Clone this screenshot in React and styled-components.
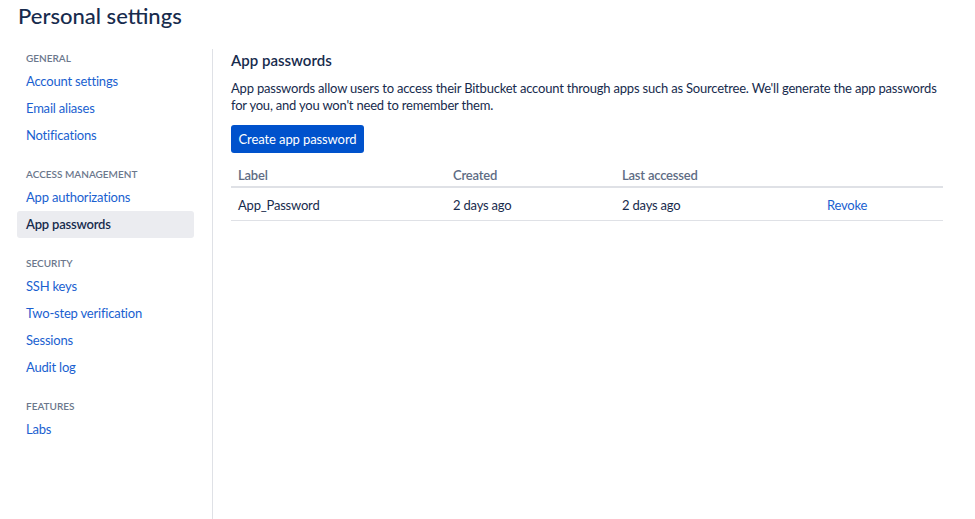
import React from "react";
import styled, { createGlobalStyle } from "styled-components";

const Global = createGlobalStyle`
  html, body { margin: 0; padding: 0; background: #fff; }
  body {
    font-family: "Lato", "Noto Sans", sans-serif;
    color: #172b4d;
  }
  * { box-sizing: border-box; }
`;

const Page = styled.div`
  padding: 0 32px 0 17px;
`;

const Title = styled.h1`
  margin: 0 0 17px 1px;
  font-size: 22px;
  line-height: 32px;
  font-weight: 500;
  color: #172b4d;
`;

const Body = styled.div`
  display: flex;
  min-height: calc(100vh - 49px);
`;

const Sidebar = styled.nav`
  width: 177px;
  flex: none;
  padding-top: 2px;
  margin-right: 18px;
`;

const Group = styled.div`
  & + & { margin-top: 18px; }
`;

const GroupTitle = styled.div`
  font-size: 10px;
  line-height: 14px;
  font-weight: 600;
  text-transform: uppercase;
  color: #6b778c;
  padding-left: 9px;
  margin-bottom: 3px;
`;

const NavItem = styled.a`
  display: block;
  height: 27px;
  line-height: 27px;
  padding-left: 9px;
  font-size: 13px;
  letter-spacing: -0.2px;
  border-radius: 3px;
  text-decoration: none;
  color: ${(p) => (p.$active ? "#172b4d" : "#1a5fd0")};
  font-weight: ${(p) => (p.$active ? 600 : 400)};
  background: ${(p) => (p.$active ? "#ebecf0" : "transparent")};
`;

const Content = styled.main`
  flex: 1;
  border-left: 1px solid #dfe1e6;
  padding: 1px 0 0 18px;
`;

const Heading = styled.h2`
  margin: 0;
  font-size: 15px;
  line-height: 20px;
  font-weight: 600;
  color: #172b4d;
`;

const Para = styled.p`
  margin: 10px 0 0;
  font-size: 13px;
  letter-spacing: -0.2px;
  line-height: 17px;
  color: #172b4d;
`;

const Button = styled.button`
  margin-top: 11px;
  height: 28px;
  width: 133px;
  padding: 0;
  border: none;
  border-radius: 3px;
  background: #0052cc;
  color: #fff;
  font-family: inherit;
  font-size: 13px;
  letter-spacing: -0.1px;
  cursor: pointer;
`;

const Table = styled.table`
  margin-top: 9px;
  width: 712px;
  border-collapse: collapse;
  table-layout: fixed;
  font-size: 13px;
  letter-spacing: -0.2px;
`;

const Th = styled.th`
  text-align: left;
  font-weight: 600;
  color: #5e6c84;
  height: 25px;
  padding: 2px 7px 0;
  border-bottom: 2px solid #dfe1e6;
`;

const Td = styled.td`
  height: 33px;
  padding: 3px 7px 0;
  border-bottom: 1px solid #dfe1e6;
  color: #172b4d;
`;

const Col = styled.col`
  width: ${(p) => p.$w}px;
`;

const Link = styled.a`
  color: #1a5fd0;
  text-decoration: none;
`;

const groups = [
  { title: "General", items: ["Account settings", "Email aliases", "Notifications"] },
  { title: "Access management", items: ["App authorizations", "App passwords"] },
  { title: "Security", items: ["SSH keys", "Two-step verification", "Sessions", "Audit log"] },
  { title: "Features", items: ["Labs"] },
];

export default function App() {
  return (
    <Page>
      <Global />
      <Title>Personal settings</Title>
      <Body>
        <Sidebar>
          {groups.map((g) => (
            <Group key={g.title}>
              <GroupTitle>{g.title}</GroupTitle>
              {g.items.map((it) => (
                <NavItem key={it} href="#" $active={it === "App passwords"}>
                  {it}
                </NavItem>
              ))}
            </Group>
          ))}
        </Sidebar>
        <Content>
          <Heading>App passwords</Heading>
          <Para>
            App passwords allow users to access their Bitbucket account through apps such as Sourcetree. We'll generate the app passwords for you, and you won't need to remember them.
          </Para>
          <Button>Create app password</Button>
          <Table>
            <colgroup>
              <Col $w={215} />
              <Col $w={169} />
              <Col $w={205} />
              <Col $w={123} />
            </colgroup>
            <thead>
              <tr>
                <Th>Label</Th>
                <Th>Created</Th>
                <Th>Last accessed</Th>
                <Th />
              </tr>
            </thead>
            <tbody>
              <tr>
                <Td>App_Password</Td>
                <Td>2 days ago</Td>
                <Td>2 days ago</Td>
                <Td><Link href="#">Revoke</Link></Td>
              </tr>
            </tbody>
          </Table>
        </Content>
      </Body>
    </Page>
  );
}
